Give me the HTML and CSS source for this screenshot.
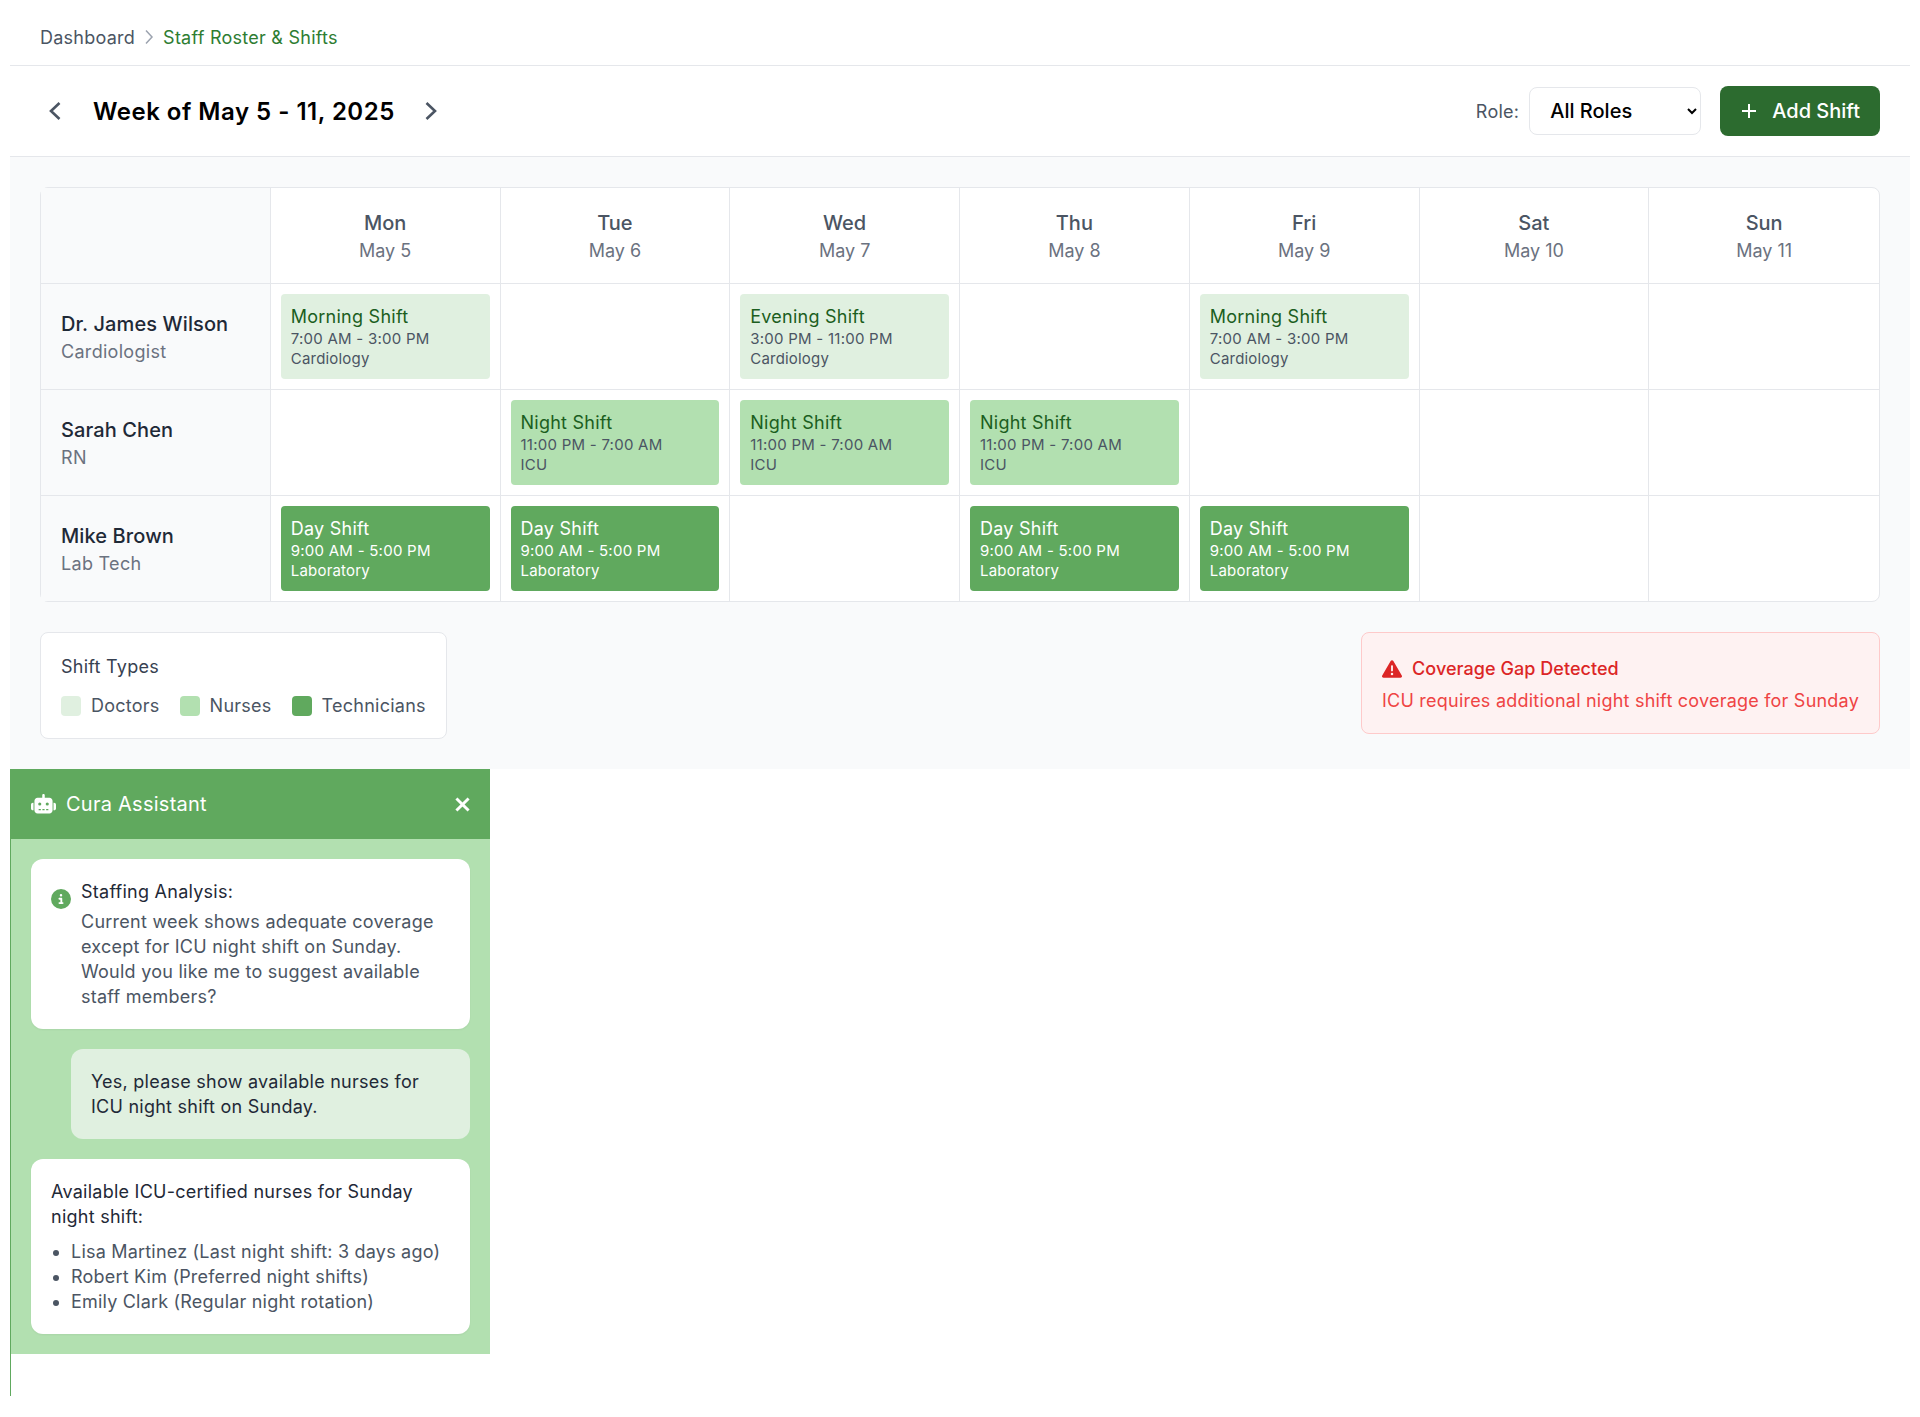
FILE: index.html
```html
<!DOCTYPE html>
<html lang="en-US">
<head>
   <meta charset="UTF-8"><title>Staff Roster &amp; Shifts</title>
   <link rel="stylesheet" href="styles.css">
</head> <body>

<nav class="crumbs">
   <span>Dashboard</span>
   <svg class="crumb-sep" viewBox="0 0 10 16"><polyline points="2,1.5 8,8 2,14.5" /></svg>
   <span class="crumb-now">Staff Roster &amp; Shifts</span>
</nav>

<header class="toolbar">
   <div class="week">
      <svg class="week-nav" viewBox="0 0 12 20"><polyline points="10.5,2 2,10 10.5,18" /></svg>
      <h1>Week of May 5 - 11, 2025</h1>
      <svg class="week-nav" viewBox="0 0 12 20"><polyline points="1.5,2 10,10 1.5,18" /></svg>
   </div>
   <div class="actions">
      <label for="role">Role:</label>
      <select id="role"><option>All Roles</option></select>
      <button class="add">
         <svg viewBox="0 0 16 16"><path d="M8 1v14M1 8h14" /></svg>
         Add Shift
      </button>
   </div>
</header>

<main class="roster">
   <section class="grid">
      <div class="cell side"></div>
      <div class="cell day"><b>Mon</b><span>May 5</span></div>
      <div class="cell day"><b>Tue</b><span>May 6</span></div>
      <div class="cell day"><b>Wed</b><span>May 7</span></div>
      <div class="cell day"><b>Thu</b><span>May 8</span></div>
      <div class="cell day"><b>Fri</b><span>May 9</span></div>
      <div class="cell day"><b>Sat</b><span>May 10</span></div>
      <div class="cell day"><b>Sun</b><span>May 11</span></div>

      <div class="cell side"><b>Dr. James Wilson</b><span>Cardiologist</span></div>
      <div class="cell"><div class="shift doctor"><b>Morning Shift</b><span>7:00 AM - 3:00 PM</span><small>Cardiology</small></div></div>
      <div class="cell"></div>
      <div class="cell"><div class="shift doctor"><b>Evening Shift</b><span>3:00 PM - 11:00 PM</span><small>Cardiology</small></div></div>
      <div class="cell"></div>
      <div class="cell"><div class="shift doctor"><b>Morning Shift</b><span>7:00 AM - 3:00 PM</span><small>Cardiology</small></div></div>
      <div class="cell"></div>
      <div class="cell"></div>

      <div class="cell side"><b>Sarah Chen</b><span>RN</span></div>
      <div class="cell"></div>
      <div class="cell"><div class="shift nurse"><b>Night Shift</b><span>11:00 PM - 7:00 AM</span><small>ICU</small></div></div>
      <div class="cell"><div class="shift nurse"><b>Night Shift</b><span>11:00 PM - 7:00 AM</span><small>ICU</small></div></div>
      <div class="cell"><div class="shift nurse"><b>Night Shift</b><span>11:00 PM - 7:00 AM</span><small>ICU</small></div></div>
      <div class="cell"></div>
      <div class="cell"></div>
      <div class="cell"></div>

      <div class="cell side"><b>Mike Brown</b><span>Lab Tech</span></div>
      <div class="cell"><div class="shift tech"><b>Day Shift</b><span>9:00 AM - 5:00 PM</span><small>Laboratory</small></div></div>
      <div class="cell"><div class="shift tech"><b>Day Shift</b><span>9:00 AM - 5:00 PM</span><small>Laboratory</small></div></div>
      <div class="cell"></div>
      <div class="cell"><div class="shift tech"><b>Day Shift</b><span>9:00 AM - 5:00 PM</span><small>Laboratory</small></div></div>
      <div class="cell"><div class="shift tech"><b>Day Shift</b><span>9:00 AM - 5:00 PM</span><small>Laboratory</small></div></div>
      <div class="cell"></div>
      <div class="cell"></div>
   </section>

   <section class="below">
      <div class="legend">
         <h2>Shift Types</h2>
         <ul>
            <li><i class="doctor"></i>Doctors</li>
            <li><i class="nurse"></i>Nurses</li>
            <li><i class="tech"></i>Technicians</li>
         </ul>
      </div>
      <div class="alert">
         <h3>
            <svg viewBox="0 0 512 512"><path d="M256 32c14.2 0 27.3 7.5 34.5 19.8l216 368c7.3 12.4 7.3 27.7 .2 40.1S486.3 480 472 480H40c-14.3 0-27.6-7.7-34.7-20.1s-7-27.8 .2-40.1l216-368C228.7 39.5 241.8 32 256 32zm0 128c-13.3 0-24 10.7-24 24V296c0 13.3 10.7 24 24 24s24-10.7 24-24V184c0-13.3-10.7-24-24-24zm32 224a32 32 0 1 0 -64 0 32 32 0 1 0 64 0z" /></svg>
            Coverage Gap Detected
         </h3>
         <p>ICU requires additional night shift coverage for Sunday</p>
      </div>
   </section>
</main>

<aside class="assistant">
   <div class="assistant-head">
      <svg class="robot" viewBox="0 0 640 512"><path d="M320 0c17.7 0 32 14.3 32 32V96H472c44.2 0 80 35.8 80 80V416c0 44.2-35.8 80-80 80H168c-44.2 0-80-35.8-80-80V176c0-44.2 35.8-80 80-80H288V32c0-17.7 14.3-32 32-32zM208 384c-8.8 0-16 7.2-16 16s7.2 16 16 16h32c8.8 0 16-7.2 16-16s-7.2-16-16-16H208zm96 0c-8.8 0-16 7.2-16 16s7.2 16 16 16h32c8.8 0 16-7.2 16-16s-7.2-16-16-16H304zm96 0c-8.8 0-16 7.2-16 16s7.2 16 16 16h32c8.8 0 16-7.2 16-16s-7.2-16-16-16H400zM264 256a40 40 0 1 0 -80 0 40 40 0 1 0 80 0zm152 40a40 40 0 1 0 0-80 40 40 0 1 0 0 80zM48 224H64V416H48c-26.5 0-48-21.5-48-48V272c0-26.5 21.5-48 48-48zm544 0c26.5 0 48 21.5 48 48v96c0 26.5-21.5 48-48 48H576V224h16z" /></svg>
      <span>Cura Assistant</span>
      <svg class="close" viewBox="0 0 14 14"><path d="M2 2l10 10M12 2L2 12" /></svg>
   </div>
   <div class="messages">
      <div class="msg bot info">
         <svg viewBox="0 0 512 512"><path d="M256 512A256 256 0 1 0 256 0a256 256 0 1 0 0 512zM216 336h24V272H216c-13.3 0-24-10.7-24-24s10.7-24 24-24h48c13.3 0 24 10.7 24 24v88h8c13.3 0 24 10.7 24 24s-10.7 24-24 24H216c-13.3 0-24-10.7-24-24s10.7-24 24-24zm40-208a32 32 0 1 1 0 64 32 32 0 1 1 0-64z" /></svg>
         <div>
            <p class="lead">Staffing Analysis:</p>
            <p class="muted">Current week shows adequate coverage except for ICU night shift on Sunday. Would you like me to suggest available staff members?</p>
         </div>
      </div>
      <div class="msg user">Yes, please show available nurses for ICU night shift on Sunday.</div>
      <div class="msg bot">
         <p class="lead">Available ICU-certified nurses for Sunday night shift:</p>
         <ul class="muted">
            <li>Lisa Martinez (Last night shift: 3 days ago)</li>
            <li>Robert Kim (Preferred night shifts)</li>
            <li>Emily Clark (Regular night rotation)</li>
         </ul>
      </div>
   </div>
</aside>

</body> </html>
```

FILE: styles.css
```css
* {
   box-sizing: border-box;
}

body {
   margin: 0 10px 21px;
   font-family: Inter, sans-serif;
   font-size: 18px;
   letter-spacing: .25px;
   color: #111827;
   background: white;
}

h1, h2, h3, p, ul {
   margin: 0;
   padding: 0;
   font-weight: 400;
}

b {
   font-weight: 500;
}

/* top bars */

.crumbs {
   height: 66px;
   padding: 9px 0 0 30px;
   display: flex;
   align-items: center;
   gap: 9px;
   color: #4b5563;
   border-bottom: 1px solid #e5e7eb;
}

.crumb-sep {
   width: 10px;
   height: 16px;
   fill: none;
   stroke: #9ca3af;
   stroke-width: 1.5;
}

.crumb-now {
   color: #2e7d32;
}

.toolbar {
   height: 91px;
   padding: 0 30px;
   display: flex;
   align-items: center;
   justify-content: space-between;
   border-bottom: 1px solid #e5e7eb;
}

.week {
   margin-left: 9px;
   display: flex;
   align-items: center;
   gap: 32px;
}

.week h1 {
   margin-right: -2px;
   font-size: 24px;
   font-weight: 600;
   letter-spacing: .5px;
   color: #000;
}

.week-nav {
   width: 12px;
   height: 20px;
   fill: none;
   stroke: #4b5563;
   stroke-width: 2.6;
}

.actions {
   display: flex;
   align-items: center;
   color: #4b5563;
}

.actions label {
   margin-right: 10px;
}

.actions select {
   width: 172px;
   height: 48px;
   padding: 0 16px;
   font: inherit;
   font-size: 20px;
   font-weight: 500;
   letter-spacing: 0;
   color: #000;
   background: white;
   border: 1px solid #e5e7eb;
   border-radius: 8px;
}

.add {
   height: 50px;
   margin-left: 19px;
   padding: 0 20px 0 21px;
   display: flex;
   align-items: center;
   gap: 15px;
   font: inherit;
   font-size: 20px;
   font-weight: 500;
   letter-spacing: 0;
   color: white;
   background: #2c6b2f;
   border: none;
   border-radius: 8px;
}

.add svg {
   width: 16px;
   height: 16px;
   fill: none;
   stroke: white;
   stroke-width: 2;
}

/* roster */

.roster {
   padding: 30px;
   background: #f9fafb;
}

.grid {
   display: grid;
   grid-template-columns: repeat(8, 1fr);
   grid-template-rows: 96px 106px 106px 105px;
   background: white;
   border: 1px solid #e5e7eb;
   border-radius: 8px;
}

.cell {
   padding: 10px;
   border-right: 1px solid #e5e7eb;
   border-bottom: 1px solid #e5e7eb;
}

.cell:nth-child(8n) {
   border-right: none;
}

.cell:nth-last-child(-n+8) {
   border-bottom: none;
}

.day {
   padding-top: 11px;
   display: flex;
   flex-direction: column;
   align-items: center;
   justify-content: center;
   gap: 5px;
   font-size: 20px;
   letter-spacing: 0;
   color: #4b5563;
}

.day span {
   font-size: 18px;
   color: #6b7280;
}

.side {
   padding-left: 20px;
   display: flex;
   flex-direction: column;
   justify-content: center;
   gap: 5px;
   font-size: 20px;
   letter-spacing: .1px;
   color: #1f2937;
   background: #f9fafb;
}

.side span {
   font-size: 18px;
   letter-spacing: .3px;
   color: #6b7280;
}

.shift {
   height: 85px;
   padding: 11px 10px 0;
   display: flex;
   flex-direction: column;
   border-radius: 4px;
   color: #4b5563;
}

.shift b {
   font-size: 18px;
   line-height: 23px;
   font-weight: 400;
   color: #1b5e20;
}

.shift span {
   font-size: 15px;
   line-height: 21px;
}

.shift small {
   font-size: 15px;
   line-height: 19px;
   letter-spacing: .2px;
}

.doctor {
   background: #e0f0e0;
}

.nurse {
   background: #b2e0b0;
}

.tech {
   background: #60a95e;
}

.shift.tech, .shift.tech b {
   color: white;
}

/* below the roster */

.below {
   margin-top: 30px;
   display: flex;
   justify-content: space-between;
   align-items: flex-start;
}

.legend {
   height: 107px;
   padding: 20px;
   background: white;
   border: 1px solid #e5e7eb;
   border-radius: 8px;
}

.legend h2 {
   margin-bottom: 11px;
   font-size: 18px;
   line-height: 28px;
   color: #374151;
}

.legend ul {
   display: flex;
   gap: 20px;
   list-style: none;
   line-height: 28px;
   color: #4b5563;
}

.legend li {
   display: flex;
   align-items: center;
   gap: 10px;
}

.legend i {
   width: 20px;
   height: 20px;
   border-radius: 4px;
}

.alert {
   height: 102px;
   padding: 23px 20px 0;
   background: #fef2f2;
   border: 1px solid #fecaca;
   border-radius: 8px;
   line-height: 26px;
   letter-spacing: .22px;
   color: #ef4444;
}

.alert h3 {
   margin-bottom: 6px;
   display: flex;
   align-items: center;
   gap: 10px;
   font-size: 18px;
   font-weight: 500;
   letter-spacing: .05px;
   color: #dc2626;
}

.alert svg {
   width: 20px;
   height: 20px;
   fill: #dc2626;
}

/* assistant */

.assistant {
   width: 480px;
   height: 627px;
   border-left: 1px solid #60a95e;
}

.assistant-head {
   height: 70px;
   margin-left: -1px;
   padding: 0 19px 0 20px;
   display: flex;
   align-items: center;
   gap: 10px;
   font-size: 20px;
   color: white;
   background: #60a95e;
}

.robot {
   width: 25px;
   height: 20px;
   margin-left: 1px;
   fill: white;
}

.close {
   width: 17px;
   height: 17px;
   margin-left: auto;
   fill: none;
   stroke: white;
   stroke-width: 2.4;
}

.messages {
   padding: 20px;
   display: flex;
   flex-direction: column;
   gap: 20px;
   background: #b2e0b0;
}

.msg {
   padding: 20px;
   border-radius: 12px;
   line-height: 25px;
   color: #1f2937;
}

.bot {
   background: white;
   box-shadow: 0 1px 2px rgba(0, 0, 0, .05);
}

.user {
   margin-left: 40px;
   background: #e0f0e0;
}

.info {
   display: flex;
   gap: 10px;
}

.info svg {
   flex: none;
   width: 20px;
   height: 20px;
   margin-top: 10px;
   fill: #60a95e;
}

.lead {
   margin-bottom: 5px;
}

.muted {
   color: #4b5563;
}

ul.muted {
   padding-left: 20px;
   margin-top: 10px;
   letter-spacing: .2px;
}
```
